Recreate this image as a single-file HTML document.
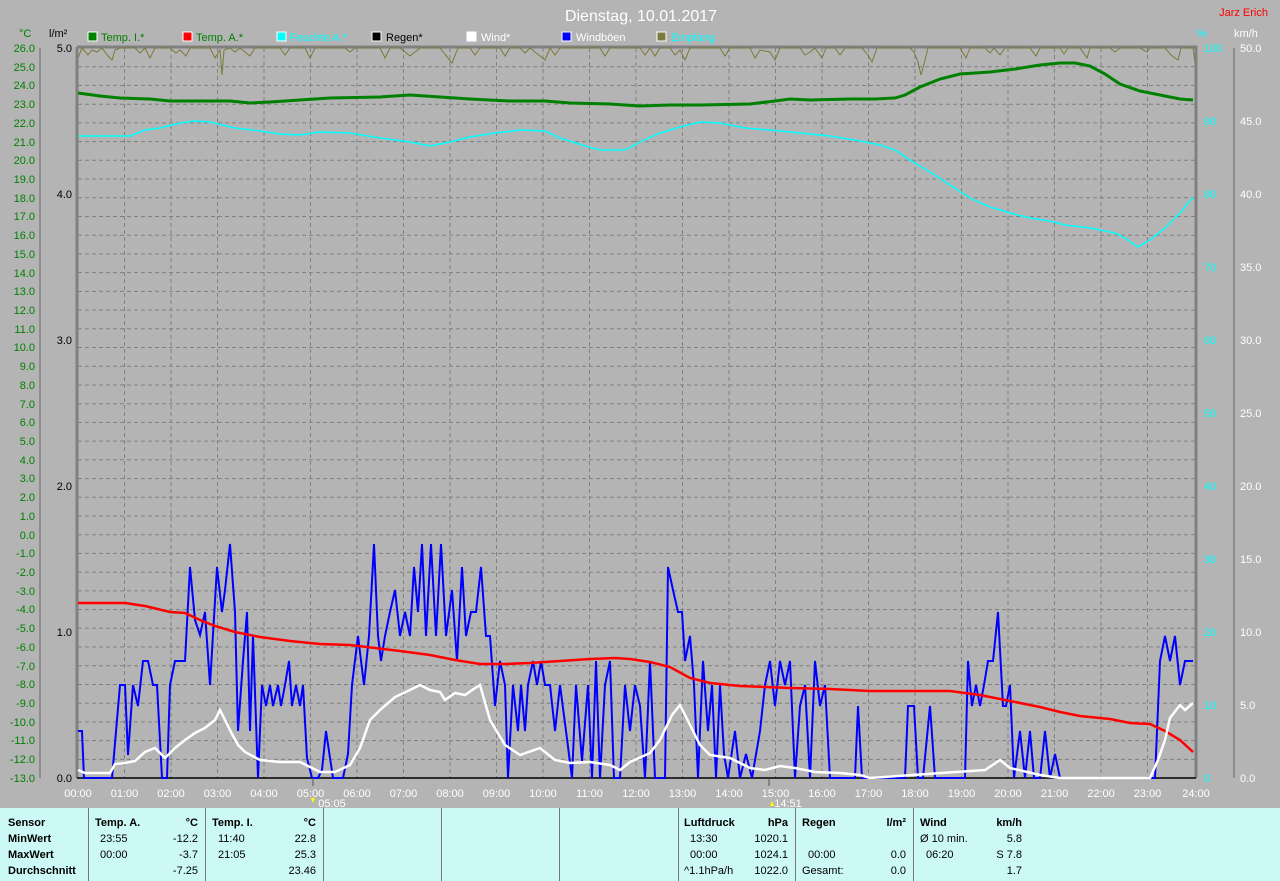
<!DOCTYPE html>
<html><head><meta charset="utf-8"><style>
body{margin:0;background:#b4b4b4;width:1280px;height:881px;overflow:hidden;font-family:"Liberation Sans",sans-serif}
svg{position:absolute;left:0;top:0}
#tbl{position:absolute;left:0;top:808px;width:1280px;height:73px;background:#ccf8f5;font:11px "Liberation Sans",sans-serif;color:#000}
.c{position:absolute;top:0;height:73px;border-left:1px solid #777}
.t{position:absolute;white-space:nowrap}
.b{font-weight:bold}
</style></head><body>
<svg width="1280" height="808" font-family="Liberation Sans, sans-serif">
<text x="641" y="21" fill="#fff" font-size="16" text-anchor="middle">Dienstag, 10.01.2017</text>
<text x="1268" y="16" fill="#f00" font-size="11" text-anchor="end">Jarz Erich</text>
<g font-size="11">
<rect x="88" y="32" width="9" height="9" fill="#008000" stroke="#fff"/><text x="101" y="41" fill="#008000">Temp. I.*</text>
<rect x="183" y="32" width="9" height="9" fill="#f00" stroke="#fff"/><text x="196" y="41" fill="#008000">Temp. A.*</text>
<rect x="277" y="32" width="9" height="9" fill="#0ff" stroke="#fff"/><text x="290" y="41" fill="#0ff">Feuchte A.*</text>
<rect x="372" y="32" width="9" height="9" fill="#000" stroke="#fff"/><text x="386" y="41" fill="#000">Regen*</text>
<rect x="467" y="32" width="9" height="9" fill="#fff" stroke="#fff"/><text x="481" y="41" fill="#fff">Wind*</text>
<rect x="562" y="32" width="9" height="9" fill="#00f" stroke="#fff"/><text x="576" y="41" fill="#fff">Windböen</text>
<rect x="657" y="32" width="9" height="9" fill="#7a7a3a" stroke="#fff"/><text x="671" y="41" fill="#0ff">Empfang</text>
<text x="19" y="37" fill="#008000">°C</text><text x="49" y="37" fill="#000">l/m²</text>
<text x="1197" y="37" fill="#0ff">%</text><text x="1234" y="37" fill="#fff">km/h</text>
</g>
<!-- grid -->
<g stroke="#808080" stroke-dasharray="4,3" stroke-width="1">
<path d="M78 66.7H1195M78 85.4H1195M78 104.2H1195M78 122.9H1195M78 141.6H1195M78 160.3H1195M78 179H1195M78 197.8H1195M78 216.5H1195M78 235.2H1195M78 253.9H1195M78 272.6H1195M78 291.4H1195M78 310.1H1195M78 328.8H1195M78 347.5H1195M78 366.2H1195M78 385H1195M78 403.7H1195M78 422.4H1195M78 441.1H1195M78 459.8H1195M78 478.6H1195M78 497.3H1195M78 516H1195M78 534.7H1195M78 553.4H1195M78 572.2H1195M78 590.9H1195M78 609.6H1195M78 628.3H1195M78 647H1195M78 665.8H1195M78 684.5H1195M78 703.2H1195M78 721.9H1195M78 740.6H1195M78 759.4H1195"/>
<path d="M124.5 48V778M171 48V778M217.5 48V778M264 48V778M310.5 48V778M357 48V778M403.5 48V778M450 48V778M496.5 48V778M543 48V778M589.5 48V778M636 48V778M682.5 48V778M729 48V778M775.5 48V778M822 48V778M868.5 48V778M915 48V778M961.5 48V778M1008 48V778M1054.5 48V778M1101 48V778M1147.5 48V778"/>
</g>
<!-- axes -->
<g stroke="#808080" stroke-width="3" fill="none"><path d="M77 47H1196V778"/><path d="M77 47V778"/></g>
<path d="M77 778H1196" stroke="#000" stroke-width="1.5"/>
<g stroke="#808080" stroke-width="1.5"><path d="M40 48V778M1234 48V778"/></g>
<!-- left temp labels -->
<g font-size="11" fill="#008000" text-anchor="end">
<text x="35" y="52">26.0</text><text x="35" y="71">25.0</text><text x="35" y="89">24.0</text><text x="35" y="108">23.0</text><text x="35" y="127">22.0</text><text x="35" y="146">21.0</text><text x="35" y="164">20.0</text><text x="35" y="183">19.0</text><text x="35" y="202">18.0</text><text x="35" y="220">17.0</text><text x="35" y="239">16.0</text><text x="35" y="258">15.0</text><text x="35" y="277">14.0</text><text x="35" y="295">13.0</text><text x="35" y="314">12.0</text><text x="35" y="333">11.0</text><text x="35" y="351">10.0</text><text x="35" y="370">9.0</text><text x="35" y="389">8.0</text><text x="35" y="408">7.0</text><text x="35" y="426">6.0</text><text x="35" y="445">5.0</text><text x="35" y="464">4.0</text><text x="35" y="482">3.0</text><text x="35" y="501">2.0</text><text x="35" y="520">1.0</text><text x="35" y="539">0.0</text><text x="35" y="557">-1.0</text><text x="35" y="576">-2.0</text><text x="35" y="595">-3.0</text><text x="35" y="613">-4.0</text><text x="35" y="632">-5.0</text><text x="35" y="651">-6.0</text><text x="35" y="670">-7.0</text><text x="35" y="688">-8.0</text><text x="35" y="707">-9.0</text><text x="35" y="726">-10.0</text><text x="35" y="744">-11.0</text><text x="35" y="763">-12.0</text><text x="35" y="782">-13.0</text>
</g>
<g font-size="11" fill="#000" text-anchor="end">
<text x="72" y="52">5.0</text><text x="72" y="198">4.0</text><text x="72" y="344">3.0</text><text x="72" y="490">2.0</text><text x="72" y="636">1.0</text><text x="72" y="782">0.0</text>
</g>
<g font-size="11" fill="#0ff">
<text x="1204" y="52">100</text><text x="1204" y="125">90</text><text x="1204" y="198">80</text><text x="1204" y="271">70</text><text x="1204" y="344">60</text><text x="1204" y="417">50</text><text x="1204" y="490">40</text><text x="1204" y="563">30</text><text x="1204" y="636">20</text><text x="1204" y="709">10</text><text x="1204" y="782">0</text>
</g>
<g font-size="11" fill="#fff">
<text x="1240" y="52">50.0</text><text x="1240" y="125">45.0</text><text x="1240" y="198">40.0</text><text x="1240" y="271">35.0</text><text x="1240" y="344">30.0</text><text x="1240" y="417">25.0</text><text x="1240" y="490">20.0</text><text x="1240" y="563">15.0</text><text x="1240" y="636">10.0</text><text x="1240" y="709">5.0</text><text x="1240" y="782">0.0</text>
</g>
<!-- olive -->
<polyline fill="none" stroke="#7a7a3a" stroke-width="1" points="78,58 82,48 88,55 92,50 97,52 102,48 108,56 112,60 115,50 120,48 135,48 140,53 145,48 150,58 155,48 170,48 176,53 180,50 186,56 190,48 210,48 215,58 220,50 222,75 224,50 230,48 235,52 240,48 250,56 255,48 280,48 285,55 290,48 305,48 310,58 315,48 330,48 345,48 350,52 355,48 380,48 385,58 390,48 400,48 410,56 420,48 440,48 452,63 458,48 470,48 475,55 480,48 500,48 505,56 510,48 520,48 525,53 530,48 545,60 550,48 555,55 560,48 600,48 605,56 610,48 640,48 645,55 650,48 655,56 660,48 670,48 675,55 680,50 685,60 690,48 720,48 725,56 730,48 750,48 755,58 760,50 770,52 775,60 780,48 800,48 805,55 810,52 815,48 822,58 826,48 835,48 840,55 845,48 862,48 868,55 872,62 877,48 910,48 914,52 918,62 921,75 925,60 928,48 960,48 966,58 970,48 985,48 990,53 994,48 1000,55 1005,48 1030,48 1036,56 1040,48 1060,48 1064,54 1068,48 1080,48 1087,58 1090,48 1110,48 1115,52 1120,48 1140,48 1147,52 1150,48 1165,48 1171,55 1175,58 1178,60 1181,48 1193,48 1195,62"/>
<!-- cyan -->
<polyline fill="none" stroke="#0ff" stroke-width="1.5" points="78,136 130,136 145,130 160,128 180,123 195,121 210,122 235,128 260,131 280,134 300,135 320,132 350,133 380,138 410,142 430,146 450,142 470,137 495,133 520,130 545,131 560,138 585,146 600,150 625,150 640,142 660,133 680,127 700,122 720,123 745,128 770,130 800,133 830,136 860,141 880,145 895,150 910,160 930,172 950,185 970,198 990,207 1010,213 1030,218 1050,221 1065,225 1090,228 1115,233 1125,238 1138,247 1150,240 1165,228 1180,213 1193,197"/>
<!-- green -->
<polyline fill="none" stroke="#008000" stroke-width="3" points="78,93 100,96 120,98 150,99 170,101 200,101 230,101 250,103 270,102 300,100 330,98 380,97 410,95 440,97 470,99 510,101 545,101 570,103 610,104 640,106 670,105 700,105 750,104 775,101 790,99 810,100 850,99 875,99 895,98 905,95 920,87 940,79 960,74 990,72 1015,69 1040,65 1060,63 1075,63 1090,66 1105,74 1120,84 1140,91 1160,95 1180,99 1193,100"/>
<!-- blue -->
<polyline fill="none" stroke="#00f" stroke-width="2" stroke-linejoin="miter" points="78,731 82,731 84,778 112,778 120,685 125,685 128,755 133,685 138,706 143,661 148,661 153,685 157,685 162,778 167,778 170,685 175,661 185,661 190,567 195,620 200,635 205,612 210,685 217,567 222,612 225,590 230,544 235,612 238,731 243,661 247,612 250,731 253,636 258,778 262,685 266,706 270,685 273,706 278,685 281,706 285,685 289,661 292,706 296,685 300,706 303,685 307,758 312,778 318,778 322,770 326,731 333,778 343,778 348,754 352,685 358,636 364,685 369,636 374,544 378,636 381,661 385,636 390,612 395,590 400,636 405,612 410,636 414,567 418,612 422,544 426,636 431,544 436,636 441,544 446,636 452,590 457,661 462,567 466,636 471,612 476,612 481,567 486,636 490,636 495,706 500,661 505,685 508,778 513,685 518,731 521,685 525,731 528,685 533,661 537,685 541,661 545,685 550,685 555,731 560,685 566,731 572,778 576,685 582,761 588,685 592,778 596,661 600,778 605,685 610,661 614,778 620,778 625,685 630,731 635,685 640,706 645,778 650,661 655,778 665,778 668,567 673,590 678,612 682,612 685,661 690,636 694,685 698,778 703,661 708,731 712,685 716,778 720,685 724,754 728,778 735,731 740,778 746,754 752,778 760,731 765,685 770,661 775,706 780,661 785,685 790,661 795,778 800,706 805,685 810,778 815,661 820,706 825,685 830,778 855,778 858,706 862,778 905,778 908,706 914,706 918,778 923,778 930,706 935,778 965,778 968,661 972,706 976,685 980,706 984,685 988,661 993,661 998,612 1003,706 1006,706 1010,685 1014,778 1020,731 1025,778 1030,731 1034,778 1040,778 1045,731 1050,778 1055,754 1060,778 1155,778 1160,661 1165,636 1170,661 1175,636 1180,685 1185,661 1193,661"/>
<!-- red -->
<polyline fill="none" stroke="#f00" stroke-width="2.5" points="78,603 125,603 145,606 170,612 185,613 200,620 215,626 235,632 260,637 290,641 320,644 350,645 375,648 400,651 430,655 455,660 480,664 505,664 530,663 560,661 590,659 615,658 630,659 650,662 670,667 690,678 710,683 740,686 790,688 830,689 870,691 910,691 950,691 980,695 1010,701 1040,707 1060,712 1080,716 1110,719 1130,723 1150,724 1165,731 1180,740 1193,752"/>
<!-- white -->
<polyline fill="none" stroke="#fff" stroke-width="2.5" points="78,770 85,773 110,773 115,764 125,763 135,761 145,752 155,748 165,758 175,748 185,740 195,733 205,728 215,720 220,710 225,720 232,734 238,745 245,752 260,760 280,762 300,762 320,772 335,772 350,765 360,748 370,720 380,710 395,697 410,690 420,685 430,690 440,692 445,700 455,693 465,695 475,688 480,685 490,720 505,745 520,755 540,748 555,760 570,763 590,762 610,765 620,770 630,762 650,753 660,740 672,715 680,705 690,725 700,745 710,755 730,758 750,768 765,770 780,766 795,768 815,772 840,773 860,775 870,778 985,770 1000,760 1010,768 1040,775 1060,778 1150,778 1158,760 1165,740 1170,718 1180,705 1185,710 1193,703"/>
<!-- time labels -->
<g font-size="11" fill="#fff" text-anchor="middle">
<text x="78" y="797">00:00</text><text x="124.5" y="797">01:00</text><text x="171" y="797">02:00</text><text x="217.5" y="797">03:00</text><text x="264" y="797">04:00</text><text x="310.5" y="797">05:00</text><text x="357" y="797">06:00</text><text x="403.5" y="797">07:00</text><text x="450" y="797">08:00</text><text x="496.5" y="797">09:00</text><text x="543" y="797">10:00</text><text x="589.5" y="797">11:00</text><text x="636" y="797">12:00</text><text x="682.5" y="797">13:00</text><text x="729" y="797">14:00</text><text x="775.5" y="797">15:00</text><text x="822" y="797">16:00</text><text x="868.5" y="797">17:00</text><text x="915" y="797">18:00</text><text x="961.5" y="797">19:00</text><text x="1008" y="797">20:00</text><text x="1054.5" y="797">21:00</text><text x="1101" y="797">22:00</text><text x="1147.5" y="797">23:00</text><text x="1196" y="797">24:00</text>
<text x="332" y="807">05:05</text><text x="788" y="807">14:51</text>
</g>
<path d="M311 798l4 0-2 5z" fill="#ff0"/><path d="M770 806l4 0-2-5z" fill="#ff0"/>
<path d="M313 778V786M769 778V786" stroke="#555"/>
</svg>
<div id="tbl">
<div class="c" style="left:88px"></div><div class="c" style="left:205px"></div><div class="c" style="left:323px"></div><div class="c" style="left:441px"></div><div class="c" style="left:559px"></div><div class="c" style="left:678px"></div><div class="c" style="left:795px"></div><div class="c" style="left:913px"></div>
<div class="t b" style="left:8px;top:9px">Sensor</div><div class="t b" style="left:8px;top:25px">MinWert</div><div class="t b" style="left:8px;top:41px">MaxWert</div><div class="t b" style="left:8px;top:57px">Durchschnitt</div>
<div class="t b" style="left:95px;top:9px">Temp. A.</div><div class="t b" style="right:1082px;top:9px">°C</div>
<div class="t" style="left:100px;top:25px">23:55</div><div class="t" style="right:1082px;top:25px">-12.2</div>
<div class="t" style="left:100px;top:41px">00:00</div><div class="t" style="right:1082px;top:41px">-3.7</div>
<div class="t" style="right:1082px;top:57px">-7.25</div>
<div class="t b" style="left:212px;top:9px">Temp. I.</div><div class="t b" style="right:964px;top:9px">°C</div>
<div class="t" style="left:218px;top:25px">11:40</div><div class="t" style="right:964px;top:25px">22.8</div>
<div class="t" style="left:218px;top:41px">21:05</div><div class="t" style="right:964px;top:41px">25.3</div>
<div class="t" style="right:964px;top:57px">23.46</div>
<div class="t b" style="left:684px;top:9px">Luftdruck</div><div class="t b" style="right:492px;top:9px">hPa</div>
<div class="t" style="left:690px;top:25px">13:30</div><div class="t" style="right:492px;top:25px">1020.1</div>
<div class="t" style="left:690px;top:41px">00:00</div><div class="t" style="right:492px;top:41px">1024.1</div>
<div class="t" style="left:684px;top:57px">^1.1hPa/h</div><div class="t" style="right:492px;top:57px">1022.0</div>
<div class="t b" style="left:802px;top:9px">Regen</div><div class="t b" style="right:374px;top:9px">l/m²</div>
<div class="t" style="left:808px;top:41px">00:00</div><div class="t" style="right:374px;top:41px">0.0</div>
<div class="t" style="left:802px;top:57px">Gesamt:</div><div class="t" style="right:374px;top:57px">0.0</div>
<div class="t b" style="left:920px;top:9px">Wind</div><div class="t b" style="right:258px;top:9px">km/h</div>
<div class="t" style="left:920px;top:25px">Ø 10 min.</div><div class="t" style="right:258px;top:25px">5.8</div>
<div class="t" style="left:926px;top:41px">06:20</div><div class="t" style="right:258px;top:41px">S 7.8</div>
<div class="t" style="right:258px;top:57px">1.7</div>
</div>
</body></html>
